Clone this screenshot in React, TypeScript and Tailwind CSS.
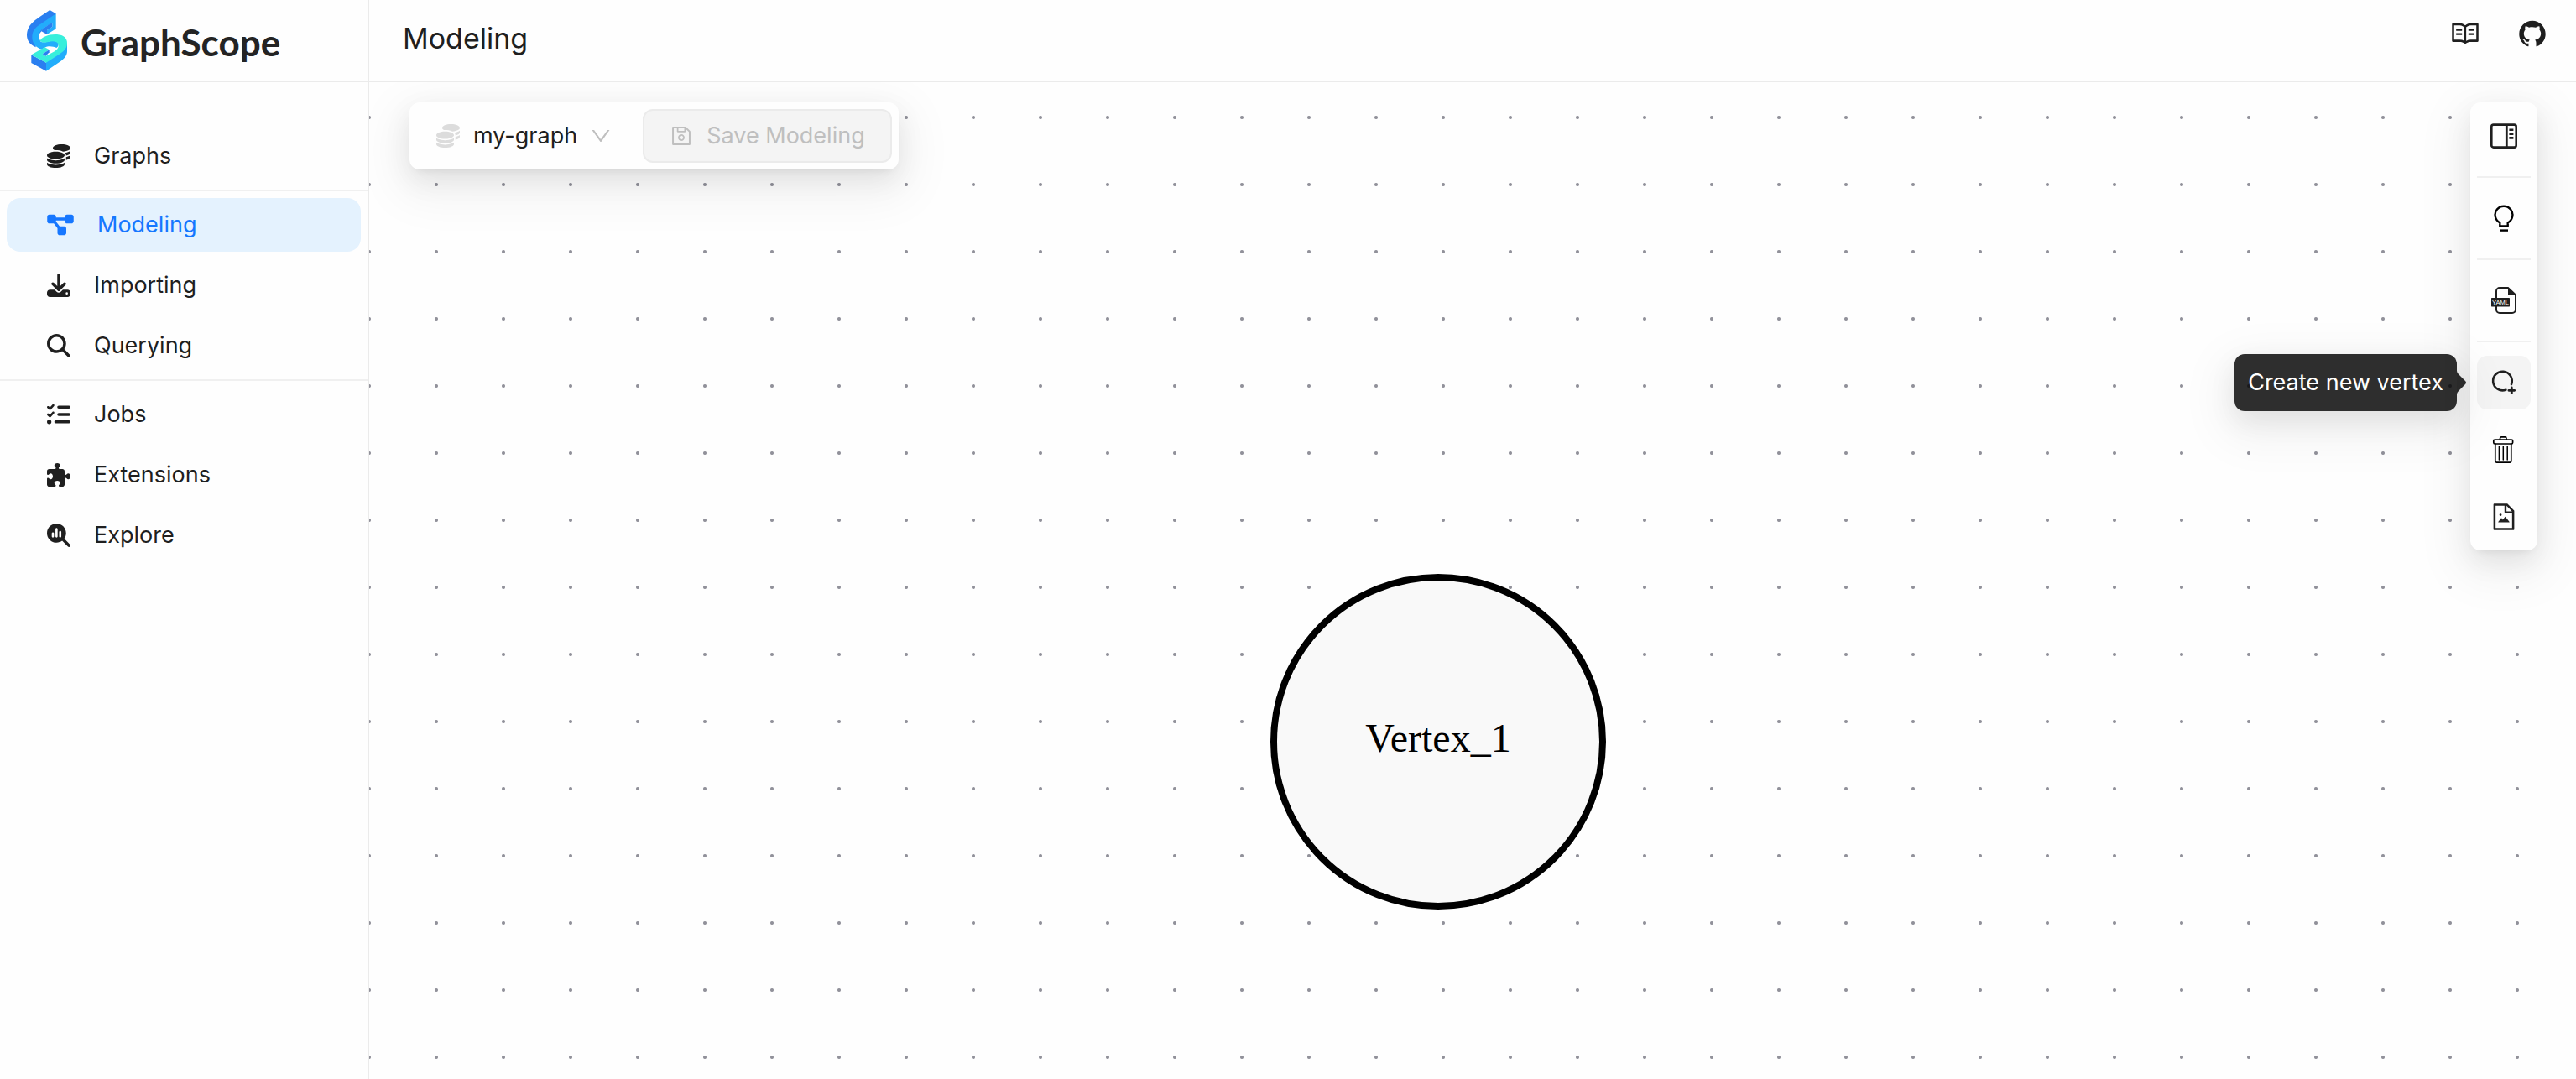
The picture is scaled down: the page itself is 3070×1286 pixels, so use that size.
import type { ReactNode } from "react";
import type { IconType } from "react-icons";
import { AiFillGithub, AiOutlineDown, AiOutlineFileImage, AiOutlineRead, AiOutlineSave } from "react-icons/ai";
import {
  FaCoins,
  FaDiagramProject,
  FaDownload,
  FaListCheck,
  FaMagnifyingGlass,
  FaMagnifyingGlassChart,
  FaPuzzlePiece,
} from "react-icons/fa6";

type NavEntry = { label: string; icon: IconType; active?: boolean; wide?: boolean };

const navGroups: NavEntry[][] = [
  [{ label: "Graphs", icon: FaCoins }],
  [
    { label: "Modeling", icon: FaDiagramProject, active: true, wide: true },
    { label: "Importing", icon: FaDownload },
    { label: "Querying", icon: FaMagnifyingGlass },
  ],
  [
    { label: "Jobs", icon: FaListCheck },
    { label: "Extensions", icon: FaPuzzlePiece },
    { label: "Explore", icon: FaMagnifyingGlassChart },
  ],
];

const panelShadow =
  "shadow-[0_12px_32px_0_rgba(0,0,0,0.08),0_6px_12px_-8px_rgba(0,0,0,0.12),0_18px_56px_16px_rgba(0,0,0,0.05)]";

function LogoMark() {
  return (
    <svg viewBox="96 37 144 219" className="h-[73px] w-12" aria-hidden="true">
      <path
        fill="#2a7ff0"
        d="M178 37 200 50 126 140 128 170C106 160 96 145 96 126C97 106 104 92 120 78C134 66 158 50 178 37Z"
      />
      <path
        fill="#22adfb"
        d="M200 50V104L168 124V109L187 97V82L150 106C138 116 136 136 146 150C160 158 184 140 204 150C212 156 210 166 202 172C190 166 172 164 160 171L148 177C130 172 116 158 115 136C115 116 120 106 136 93Z"
      />
      <path fill="#2a7ff0" d="M187 82V97L168 109V124L148 113C152 104 168 92 187 82Z" />
      <path fill="#22adfb" d="M240 153V184C240 198 232 209 218 219L165 255V222L225 182Z" />
      <path fill="#2a7ff0" d="M112 197 165 225V255L112 226Z" />
      <path
        fill="#38efdb"
        d="M143 147C150 132 176 122 204 124C228 126 240 138 240 155C240 172 230 183 214 194L165 225L112 197L160 170L176 179L152 194L163 202L196 184C206 178 212 168 208 158C202 146 184 148 172 151C160 154 150 153 143 147Z"
      />
      <path fill="#2a7ff0" d="M152 194 176 179V188L163 202Z" />
    </svg>
  );
}

function PropertiesPanelIcon() {
  return (
    <svg viewBox="0 0 32 32" className="size-8" aria-hidden="true">
      <rect x="1.3" y="2.6" width="29.4" height="27" rx="2.4" fill="none" stroke="#1f1f1f" strokeWidth="2.6" />
      <path d="M19.3 3V29" stroke="#1f1f1f" strokeWidth="2.8" />
      <path d="M22.4 8.8H27.4M22.4 13.6H27.4M22.4 18.4H27.4" stroke="#1f1f1f" strokeWidth="2.6" />
    </svg>
  );
}

function BulbIcon() {
  return (
    <svg viewBox="0 0 32 32" className="size-8" aria-hidden="true">
      <path
        d="M11.3 25.4V21.4A10.4 10.4 0 1 1 20.7 21.4V25.4Z"
        fill="none"
        stroke="#000"
        strokeWidth="2.4"
        strokeLinejoin="round"
      />
      <path d="M11 30.6H21" stroke="#000" strokeWidth="2.4" />
    </svg>
  );
}

function YamlIcon() {
  return (
    <svg viewBox="0 0 32 32" className="size-8" aria-hidden="true">
      <path
        d="M21 1H11A4 4 0 0 0 7 5V27A4 4 0 0 0 11 31H26A4 4 0 0 0 30 27V9.5Z"
        fill="none"
        stroke="#1f1f1f"
        strokeWidth="2"
      />
      <path d="M21 1 30.5 10H21Z" fill="#1f1f1f" />
      <rect x="1" y="13" width="22" height="10.4" rx="0.6" fill="#1f1f1f" />
      <text x="12" y="21" fill="#fff" textAnchor="middle" fontSize="7.5" fontFamily="Liberation Sans, sans-serif">
        YAML
      </text>
    </svg>
  );
}

function AddVertexIcon() {
  return (
    <svg viewBox="0 0 32 32" className="size-8" aria-hidden="true">
      <path
        d="M18.4 24.6A11.3 11.3 0 1 1 25 18"
        fill="none"
        stroke="#1f1f1f"
        strokeWidth="2.6"
        strokeLinecap="round"
      />
      <path d="M25.3 21.9V28.7M21.9 25.3H28.7" stroke="#1f1f1f" strokeWidth="2.8" strokeLinecap="round" />
    </svg>
  );
}

function TrashIcon() {
  return (
    <svg viewBox="0 0 32 32" className="size-8" aria-hidden="true">
      <g fill="none" stroke="#000" strokeWidth="1.7" strokeLinejoin="round" strokeLinecap="round">
        <path d="M11.5 4V2.4A1.5 1.5 0 0 1 13 0.9H17.5A1.5 1.5 0 0 1 19 2.4V4" />
        <rect x="3.8" y="4" width="22.8" height="5" rx="1.5" />
        <path d="M5.8 9V29.5A1.6 1.6 0 0 0 7.4 31.1H23.2A1.6 1.6 0 0 0 24.8 29.5V9" />
        <path d="M10.4 12.3V28M15.3 12.3V28M20.2 12.3V28" strokeWidth="1.5" />
      </g>
    </svg>
  );
}

function ToolButton({ label, active, children }: { label: string; active?: boolean; children: ReactNode }) {
  return (
    <button
      type="button"
      aria-label={label}
      className={`flex size-16 items-center justify-center rounded-xl text-[#1f1f1f] ${active ? "bg-[#f4f4f4]" : ""}`}
    >
      {children}
    </button>
  );
}

function Divider() {
  return <div role="separator" className="h-0.5 w-full bg-[#f0f0f0]" />;
}

function Sidebar() {
  return (
    <aside className="flex w-[440px] shrink-0 flex-col border-r-2 border-[#ebebeb]">
      <div className="flex h-[98px] items-center gap-4 border-b-2 border-[#ebebeb] pl-8">
        <LogoMark />
        <span className="pt-1 font-['Lato',sans-serif] text-[44px] leading-none font-bold text-[#242424]">
          GraphScope
        </span>
      </div>
      <nav className="flex flex-col gap-2 pt-14">
        {navGroups.map((group, index) => (
          <div key={index} className="flex flex-col gap-2">
            {index > 0 && <Divider />}
            {group.map(({ label, icon: Icon, active, wide }) => (
              <a
                key={label}
                href={`#${label.toLowerCase()}`}
                aria-current={active ? "page" : undefined}
                className={`mx-2 flex h-16 items-center gap-7 rounded-2xl pl-12 text-[27px] ${
                  active ? "bg-[#e4f2fe] text-[#1677ff]" : "text-[#1f1f1f]"
                }`}
              >
                <Icon className={wide ? "h-7 w-8" : "size-7"} aria-hidden="true" />
                {label}
              </a>
            ))}
          </div>
        ))}
      </nav>
    </aside>
  );
}

function Header() {
  return (
    <header className="flex h-[98px] shrink-0 items-start justify-between border-b-2 border-[#ebebeb] pr-5 pl-10">
      <h1 className="pt-6 text-[34px] leading-[44px] text-[#1f1f1f]">Modeling</h1>
      <div className="flex gap-4 pt-2">
        <a href="#docs" aria-label="Documentation" className="flex size-16 items-center justify-center text-[#1f1f1f]">
          <AiOutlineRead className="size-9" />
        </a>
        <a href="#github" aria-label="GitHub" className="flex size-16 items-center justify-center text-[#1f1f1f]">
          <AiFillGithub className="size-9" />
        </a>
      </div>
    </header>
  );
}

function GraphToolbar() {
  return (
    <div className={`flex items-center gap-9 rounded-xl bg-[#fefefe] p-2 pl-8 ${panelShadow}`}>
      <div className="flex items-center text-[27px]">
        <FaCoins className="size-7 text-[#dcdcdc]" aria-hidden="true" />
        <select
          aria-label="Graph"
          className="field-sizing-content appearance-none bg-transparent pr-3.5 pl-4 text-[#1f1f1f]"
        >
          <option>my-graph</option>
        </select>
        <AiOutlineDown className="pointer-events-none size-7 text-[#bfbfbf]" aria-hidden="true" />
      </div>
      <button
        type="button"
        disabled
        className="flex h-16 items-center gap-4 rounded-xl border-2 border-[#ebebeb] bg-[#f4f4f4] px-[30px] text-[27px] text-[#bfbfbf]"
      >
        <AiOutlineSave className="size-7" aria-hidden="true" />
        Save Modeling
      </button>
    </div>
  );
}

function ToolPanel() {
  return (
    <div
      role="toolbar"
      aria-label="Canvas tools"
      className={`flex w-20 flex-col gap-4 rounded-xl bg-[#fefefe] p-2 ${panelShadow}`}
    >
      <ToolButton label="Toggle properties panel">
        <PropertiesPanelIcon />
      </ToolButton>
      <Divider />
      <ToolButton label="Hints">
        <BulbIcon />
      </ToolButton>
      <Divider />
      <ToolButton label="Import YAML">
        <YamlIcon />
      </ToolButton>
      <Divider />
      <div className="relative">
        <ToolButton label="Create new vertex" active>
          <AddVertexIcon />
        </ToolButton>
        <div
          role="tooltip"
          className="absolute top-1/2 right-full mr-6 -translate-y-1/2 rounded-xl bg-black/82 px-4 py-3 text-[27px] leading-[44px] whitespace-nowrap text-white shadow-[0_12px_32px_0_rgba(0,0,0,0.08),0_18px_56px_16px_rgba(0,0,0,0.05)]"
        >
          Create new vertex
          <svg
            viewBox="0 0 11 32"
            className="absolute top-1/2 left-full h-8 w-[11px] -translate-y-1/2"
            aria-hidden="true"
          >
            <path d="M0 2Q0 4 2 6L10 14Q12 16 10 18L2 26Q0 28 0 30Z" fill="#000" fillOpacity="0.82" />
          </svg>
        </div>
      </div>
      <ToolButton label="Clear canvas">
        <TrashIcon />
      </ToolButton>
      <ToolButton label="Export image">
        <AiOutlineFileImage className="size-9" />
      </ToolButton>
    </div>
  );
}

export default function App() {
  return (
    <div className="flex min-h-screen bg-[#fefefe] font-['Inter',sans-serif]">
      <Sidebar />
      <main className="flex min-w-0 flex-1 flex-col">
        <Header />
        <section
          aria-label="Graph canvas"
          className="relative flex flex-1 items-start justify-between overflow-hidden bg-[radial-gradient(circle,#91919a_1.5px,transparent_2.5px)] bg-size-[80px_80px] bg-position-[-40px_2px] pt-6 pr-[46px] pl-12"
        >
          <div className="absolute top-[586px] left-[1074px] flex size-[400px] items-center justify-center rounded-full border-8 border-black bg-[#f9f9f9] pb-2 font-['Liberation_Serif',serif] text-5xl text-black">
            Vertex_1
          </div>
          <GraphToolbar />
          <ToolPanel />
        </section>
      </main>
    </div>
  );
}
